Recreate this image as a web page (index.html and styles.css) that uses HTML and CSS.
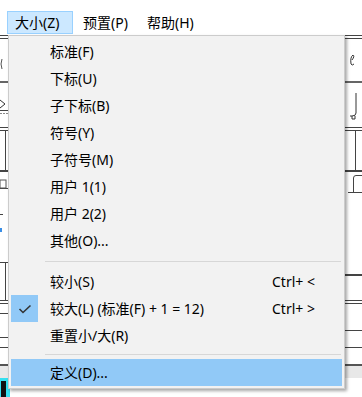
FILE: index.html
```html
<!DOCTYPE html>
<html lang="zh">
<head>
<meta charset="utf-8">
<link rel="stylesheet" href="styles.css">
</head>
<body>
<div class="menubar">
  <div class="mb-item mb-active">大小(Z)</div>
  <div class="mb-item">预置(P)</div>
  <div class="mb-item">帮助(H)</div>
</div>
<div class="workspace">
  <svg class="bg" width="362" height="362" viewBox="0 35 362 362" xmlns="http://www.w3.org/2000/svg">
    <g stroke="#444" stroke-width="1" fill="none">
      <line x1="0" y1="35.5" x2="362" y2="35.5"/>
      <line x1="0" y1="38.5" x2="362" y2="38.5"/>
      <line x1="0" y1="82" x2="362" y2="82" stroke="#666" stroke-width="2"/>
      <line x1="0" y1="110.5" x2="8" y2="110.5"/>
      <line x1="0" y1="113.5" x2="8" y2="113.5" stroke-dasharray="2 1" stroke="#888"/>
      <line x1="0" y1="127.5" x2="362" y2="127.5"/>
      <line x1="0" y1="130.5" x2="362" y2="130.5"/>
      <line x1="5.5" y1="130" x2="5.5" y2="171"/>
      <line x1="355.5" y1="130" x2="355.5" y2="171"/>
      <line x1="0" y1="171" x2="362" y2="171" stroke-width="2"/>
      <line x1="0" y1="188.5" x2="8" y2="188.5"/>
      <line x1="348" y1="192.5" x2="362" y2="192.5"/>
      <path d="M362 175.5 H356 Q353.5 175.5 353.5 178 V192"/>
      <line x1="0" y1="214.5" x2="3" y2="214.5"/>
      <line x1="0" y1="262.5" x2="8" y2="262.5"/>
      <line x1="5.5" y1="262" x2="5.5" y2="300"/>
      <line x1="345" y1="275" x2="362" y2="275" stroke-width="2"/>
      <line x1="0" y1="300.5" x2="362" y2="300.5"/>
      <line x1="0" y1="303.5" x2="362" y2="303.5"/>
      <line x1="0" y1="313.5" x2="8" y2="313.5"/>
      <line x1="345" y1="330.5" x2="362" y2="330.5"/>
      <line x1="0" y1="337.5" x2="8" y2="337.5"/>
      <line x1="0" y1="347.5" x2="362" y2="347.5"/>
      <line x1="0" y1="365" x2="362" y2="365" stroke-width="2" stroke="#555"/>
      <path d="M0 100 L5 104 L0 108" stroke="#333"/>
      <path d="M2 59 Q0 64 2 69" stroke="#555"/>
    </g>
    <rect x="0" y="228" width="2" height="4" fill="#3a8ee6"/>
    <rect x="0" y="378" width="10" height="19" fill="#36e0f0"/>
    <rect x="1" y="381" width="5" height="16" fill="#111"/>
    <rect x="0" y="366" width="362" height="12" fill="#e8e8e8"/>
    <path d="M352 60 q3 -4 1 -5 q-3 2 -2 9 q1 2 3 0" stroke="#333" fill="none"/>
    <path d="M356 93 v20 q0 3 -4 3 h-2 M352 116 v3 h3 v-3" stroke="#333" fill="none"/>
    <rect x="0" y="180" width="6" height="8" fill="none" stroke="#555"/>
  </svg>
</div>
<div class="popup">
  <div class="item"><span class="gutter"></span><span class="label">标准(F)</span></div>
  <div class="item"><span class="gutter"></span><span class="label">下标(U)</span></div>
  <div class="item"><span class="gutter"></span><span class="label">子下标(B)</span></div>
  <div class="item"><span class="gutter"></span><span class="label">符号(Y)</span></div>
  <div class="item"><span class="gutter"></span><span class="label">子符号(M)</span></div>
  <div class="item"><span class="gutter"></span><span class="label">用户 1(1)</span></div>
  <div class="item"><span class="gutter"></span><span class="label">用户 2(2)</span></div>
  <div class="item"><span class="gutter"></span><span class="label">其他(O)...</span></div>
  <div class="sep sep-a"></div>
  <div class="item"><span class="gutter"></span><span class="label">较小(S)</span><span class="key">Ctrl+ &lt;</span></div>
  <div class="item"><span class="gutter checked"><svg width="14" height="10" viewBox="0 0 14 10"><path d="M1.5 5 L5 8.5 L12.5 1.5" stroke="#333" stroke-width="1.6" fill="none"/></svg></span><span class="label">较大(L) (标准(F) + 1 = 12)</span><span class="key">Ctrl+ &gt;</span></div>
  <div class="item"><span class="gutter"></span><span class="label">重置小/大(R)</span></div>
  <div class="sep sep-b"></div>
  <div class="item item-hot"><span class="gutter"></span><span class="label">定义(D)...</span></div>
</div>
</body>
</html>
```

FILE: styles.css
```css
html, body {
  margin: 0;
  padding: 0;
  background: #ffffff;
  width: 362px;
  height: 397px;
  overflow: hidden;
}
body {
  position: relative;
  font-family: "Noto Sans", "Noto Sans CJK SC", sans-serif;
  font-size: 14px;
  color: #000;
}
.menubar {
  display: flex;
  height: 35px;
  align-items: flex-start;
  padding-left: 7px;
  box-sizing: border-box;
}
.mb-item {
  margin-top: 11px;
  height: 23px;
  box-sizing: border-box;
  border: 1px solid transparent;
  display: flex;
  align-items: center;
  padding: 0 7px;
  line-height: 1;
}
.mb-item:nth-child(1) { width: 66px; }
.mb-item:nth-child(2) { width: 66px; padding-left: 9px; }
.mb-active {
  background: #cce8ff;
  border-color: #99d1ff;
}
.workspace {
  height: 362px;
}
.bg { display: block; }
.popup {
  position: absolute;
  left: 8px;
  top: 35px;
  width: 337px;
  box-sizing: border-box;
  background: #f2f2f2;
  border: 1px solid #cccccc;
  padding: 2px;
  box-shadow: 2px 2px 3px rgba(0, 0, 0, 0.35);
}
.item {
  height: 27px;
  display: grid;
  grid-template-columns: 27px 234px 1fr;
  align-items: center;
  line-height: 1;
}
.gutter {
  width: 27px;
  height: 27px;
  display: flex;
  align-items: center;
  justify-content: center;
}
.checked { background: #91c9f7; }
.label {
  padding-left: 12px;
  white-space: pre;
}
.key { white-space: pre; }
.item-hot { background: #91c9f7; }
.sep {
  margin-left: 34px;
  margin-right: 1px;
  border-top: 1px solid #d7d7d7;
}
.sep-a { margin-top: 7px; margin-bottom: 6px; }
.sep-b { margin-top: 5px; margin-bottom: 4px; }
```
